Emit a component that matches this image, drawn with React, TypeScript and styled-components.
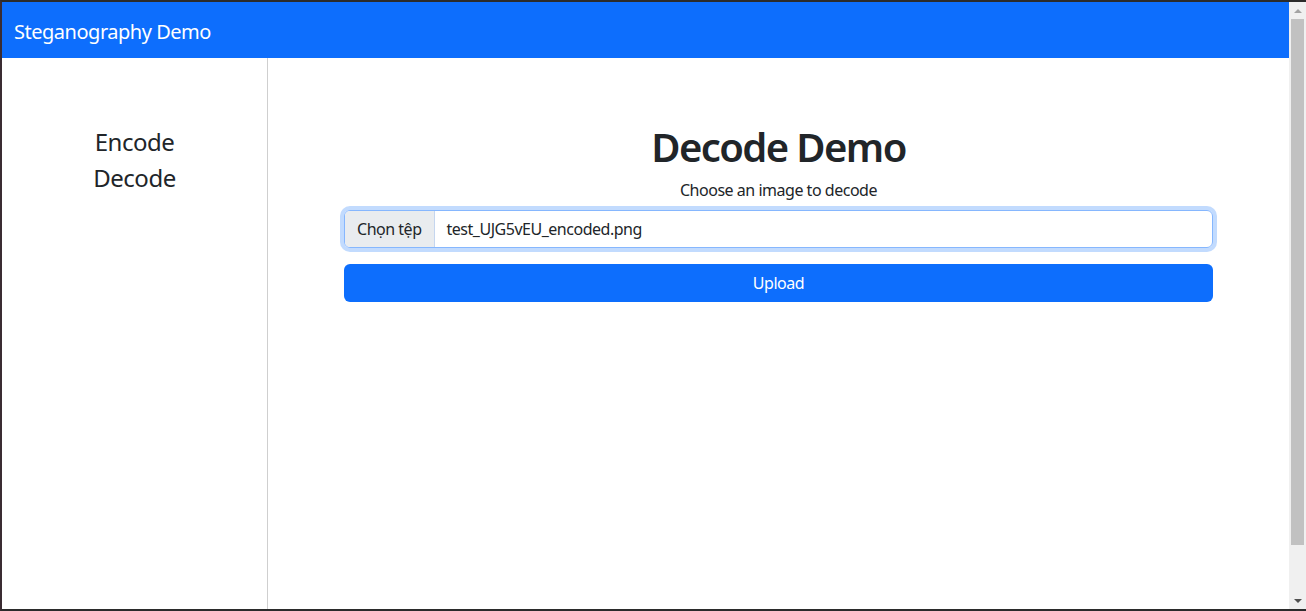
import styled, { createGlobalStyle } from "styled-components";

const GlobalStyle = createGlobalStyle`
  html, body {
    margin: 0;
    padding: 0;
    overflow: hidden;
    background: #fff;
  }

  body {
    font-family: "Noto Sans", "Open Sans", sans-serif;
    letter-spacing: -0.03em;
    color: #212529;
  }

  * {
    box-sizing: border-box;
  }
`;

export default function App(): JSX.Element {
  return (
    <>
      <GlobalStyle />
      <Window>
        <Page>
          <Navbar>
            <Brand>Steganography Demo</Brand>
          </Navbar>
          <Body>
            <Sidebar>
              <NavLink>Encode</NavLink>
              <NavLink>Decode</NavLink>
            </Sidebar>
            <Main>
              <Content>
                <Title>Decode Demo</Title>
                <Hint>Choose an image to decode</Hint>
                <FileInput>
                  <FileButton>Chọn tệp</FileButton>
                  <FileName>test_UJG5vEU_encoded.png</FileName>
                </FileInput>
                <UploadButton>Upload</UploadButton>
              </Content>
            </Main>
          </Body>
        </Page>
        <Scrollbar>
          <Arrow $dir="up" />
          <Track>
            <Thumb />
          </Track>
          <Arrow $dir="down" />
        </Scrollbar>
      </Window>
    </>
  );
}

const Window = styled.div`
  display: flex;
  height: 611px;
  border-top: 2px solid #2b2b2b;
  border-bottom: 2px solid #2b2b2b;
  border-left: 2px solid #3a2c32;
  overflow: hidden;
`;

const Page = styled.div`
  flex: 1;
  display: flex;
  flex-direction: column;
  min-width: 0;
`;

const Navbar = styled.nav`
  height: 56px;
  flex-shrink: 0;
  display: flex;
  align-items: center;
  padding: 3px 12px 0;
  background: #0d6efd;
`;

const Brand = styled.span`
  font-size: 20px;
  line-height: 30px;
  color: #fff;
`;

const Body = styled.div`
  flex: 1;
  display: flex;
`;

const Sidebar = styled.aside`
  width: 266px;
  flex-shrink: 0;
  border-right: 1px solid #cfcfcf;
  padding-top: 66px;
  display: flex;
  flex-direction: column;
  align-items: center;
`;

const NavLink = styled.a`
  font-size: 24px;
  line-height: 36px;
  color: #212529;
  text-decoration: none;
`;

const Main = styled.main`
  flex: 1;
  padding: 65px 76px 0;
`;

const Content = styled.div`
  max-width: 869px;
  margin: 0 auto;
  display: flex;
  flex-direction: column;
`;

const Title = styled.h1`
  margin: 0 0 7px;
  font-size: 40px;
  line-height: 48px;
  font-weight: 600;
  letter-spacing: -0.04em;
  text-align: center;
`;

const Hint = styled.p`
  margin: 0 0 8px;
  font-size: 16px;
  line-height: 24px;
  text-align: center;
`;

const FileInput = styled.div`
  display: flex;
  height: 38px;
  border: 1px solid #86b7fe;
  border-radius: 6px;
  box-shadow: 0 0 0 4px rgba(13, 110, 253, 0.25);
  overflow: hidden;
  font-size: 16px;
  line-height: 24px;
`;

const FileButton = styled.span`
  display: flex;
  align-items: center;
  padding: 0 12px;
  background: #e9ecef;
  border-right: 1px solid #c5d6ef;
  color: #212529;
`;

const FileName = styled.span`
  display: flex;
  align-items: center;
  padding: 0 12px;
`;

const UploadButton = styled.button`
  margin-top: 16px;
  height: 38px;
  border: none;
  border-radius: 6px;
  background: #0d6efd;
  color: #fff;
  font-family: inherit;
  letter-spacing: inherit;
  font-size: 16px;
  line-height: 24px;
`;

const Scrollbar = styled.div`
  width: 17px;
  flex-shrink: 0;
  display: flex;
  flex-direction: column;
  background: #f0f0f0;
`;

const Arrow = styled.div<{ $dir: "up" | "down" }>`
  height: 17px;
  flex-shrink: 0;
  display: flex;
  align-items: center;
  justify-content: center;

  &::before {
    content: "";
    border-left: 4px solid transparent;
    border-right: 4px solid transparent;
    ${(p) =>
      p.$dir === "up"
        ? "border-bottom: 4px solid #a3a3a3;"
        : "border-top: 4px solid #505050;"}
  }
`;

const Track = styled.div`
  flex: 1;
  padding: 0 2px;
`;

const Thumb = styled.div`
  height: 526px;
  background: #c1c1c1;
`;
